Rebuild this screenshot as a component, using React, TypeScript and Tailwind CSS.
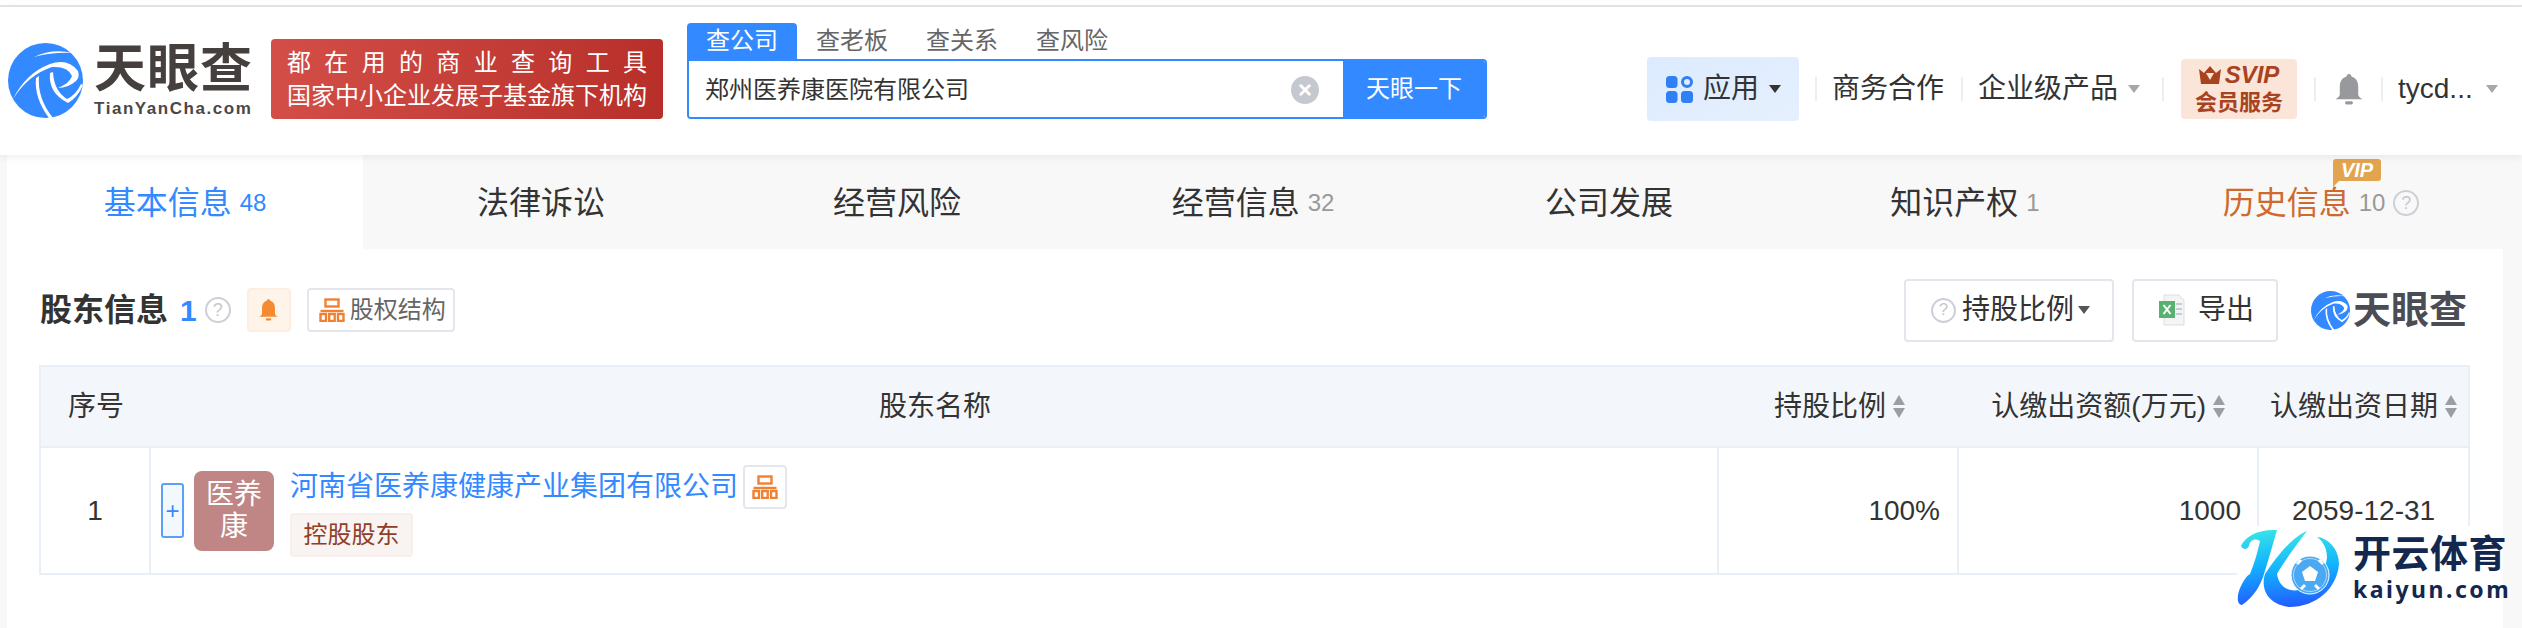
import { ReactNode } from 'react';

const BLUE = '#3389ff';

const TABS = [
  { label: '基本信息', count: '48', active: true },
  { label: '法律诉讼' },
  { label: '经营风险' },
  { label: '经营信息', count: '32' },
  { label: '公司发展' },
  { label: '知识产权', count: '1' },
  { label: '历史信息', count: '10', vip: true },
];

const TyLogoMark = ({ className }: { className: string }) => (
  <svg viewBox="0 0 75 75" className={className}>
    <circle cx="37.5" cy="37.5" r="37.5" fill={BLUE} />
    <path d="M26 14 Q44 5 65 10 Q45 9 26 14Z" fill="#fff" />
    <path d="M5 56 Q18 30 42 21 Q60 15 70 28 Q72 34 68 38 Q60 45 50 45 Q62 40 64 33 Q60 23 44 24 Q20 32 5 56Z" fill="#fff" />
    <path d="M31 33 Q29 55 45 75 L41 75 Q26 55 28 35Z" fill="#fff" />
    <path d="M42 30 Q40 50 60 60 Q70 54 75 42 L73 41 Q68 52 59 56 Q46 48 45 29Z" fill="#fff" />
  </svg>
);

const OrgIcon = ({ className }: { className: string }) => (
  <svg viewBox="0 0 26 24" fill="none" stroke="#f08132" strokeWidth="2.4" className={className}>
    <rect x="6.5" y="1.5" width="13" height="7" />
    <path d="M1.5 13h23" />
    <rect x="1.5" y="16" width="5.5" height="7" />
    <rect x="10.2" y="16" width="5.5" height="7" />
    <rect x="19" y="16" width="5.5" height="7" />
  </svg>
);

const BellIcon = ({ className, fill }: { className: string; fill: string }) => (
  <svg viewBox="0 0 28 32" className={className} fill={fill}>
    <path d="M14 0c1.500 0 2.500 1 2.500 2.500C21.500 4 23.500 8 23.500 13v8c0 2 2 4 4.500 5H0c2.500-1 4.500-3 4.500-5v-8c0-5 2-9 7-10.500C11.500 1 12.500 0 14 0z" />
    <rect x="10" y="28" width="8" height="3.500" rx="1.500" />
  </svg>
);

const Help = ({ className }: { className: string }) => (
  <span className={`flex items-center justify-center rounded-full border-2 border-[#ccd0d6] text-[#c4c8ce] ${className}`}>?</span>
);

const Caret = ({ className }: { className: string }) => (
  <span className={`h-0 w-0 border-x-[6px] border-t-[8px] border-x-transparent ${className}`} />
);

const Sort = () => (
  <span className="ml-[7px] flex flex-col gap-[3px]">
    <span className="h-0 w-0 border-x-[6px] border-b-[10px] border-x-transparent border-b-[#9a9ea5]" />
    <span className="h-0 w-0 border-x-[6px] border-t-[10px] border-x-transparent border-t-[#9a9ea5]" />
  </span>
);

const Divider = ({ className }: { className: string }) => <span className={`h-[24px] w-[2px] bg-[#eeeeee] ${className}`} />;

const OutlineBtn = ({ className, children }: { className: string; children: ReactNode }) => (
  <div className={`flex items-center rounded-[4px] border-2 border-[#e3e6ec] bg-white ${className}`}>{children}</div>
);

const Nav = () => (
  <header className="relative z-10 flex h-[148px] shrink-0 items-start bg-white shadow-[0_2px_8px_rgba(0,0,0,0.07)]">
    <div className="ml-[8px] mt-[36px] flex w-[263px] shrink-0 items-start">
      <TyLogoMark className="h-[75px] w-[75px] shrink-0" />
      <div className="ml-[11px] flex flex-col">
        <span className="whitespace-nowrap text-[52px] leading-[52px] font-bold tracking-[1px] text-[#45403e]">天眼查</span>
        <span className="mt-[5px] whitespace-nowrap text-[17px] leading-[18px] font-bold tracking-[1.55px] text-[#4b4745]">TianYanCha.com</span>
      </div>
    </div>
    <div className="mt-[32px] flex h-[80px] w-[392px] flex-col items-center justify-center rounded-[4px] bg-gradient-to-r from-[#d44e48] to-[#b72f28] text-[24px] leading-[33px] text-white">
      <div className="flex w-[360px] justify-between">
        {'都在用的商业查询工具'.split('').map((c) => (
          <span key={c}>{c}</span>
        ))}
      </div>
      <div>国家中小企业发展子基金旗下机构</div>
    </div>
    <div className="ml-[24px] mt-[16px] w-[800px]">
      <div className="flex h-[36px] text-[24px] leading-[36px] text-[#666666]">
        <span className="w-[110px] rounded-t-[4px] bg-[#3389ff] text-center text-white">查公司</span>
        <span className="w-[110px] text-center">查老板</span>
        <span className="w-[110px] text-center">查关系</span>
        <span className="w-[110px] text-center">查风险</span>
      </div>
      <div className="flex h-[60px] overflow-hidden rounded-b-[4px] rounded-tr-[4px] border-2 border-[#3389ff]">
        <div className="flex flex-1 items-center bg-white pl-[16px] pr-[24px] pt-[2px] text-[24px] text-[#333333]">
          <span className="flex-1">郑州医养康医院有限公司</span>
          <span className="flex h-[28px] w-[28px] items-center justify-center rounded-full bg-[#c5c8ce] text-[24px] leading-none font-bold text-white">×</span>
        </div>
        <div className="flex w-[142px] items-center justify-center bg-[#3389ff] text-[24px] text-white">天眼一下</div>
      </div>
    </div>
    <div className="ml-[160px] mt-[50px] flex h-[64px] w-[152px] items-center rounded-[4px] bg-gradient-to-br from-[#dcebff] to-[#e6f0fd] pl-[19px]">
      <svg viewBox="0 0 27 27" className="h-[27px] w-[27px]">
        <rect x="0" y="0" width="11.500" height="12" rx="3.500" fill="#2f7ff5" />
        <circle cx="21" cy="6" r="4.500" fill="none" stroke="#2f7ff5" strokeWidth="3" />
        <rect x="0" y="15" width="11.500" height="12" rx="3.500" fill="#2f7ff5" />
        <rect x="15" y="15" width="12" height="12" rx="3.500" fill="#2f7ff5" />
      </svg>
      <span className="ml-[10px] text-[28px] text-[#333333]">应用</span>
      <Caret className="ml-[10px] border-t-[#333333]" />
    </div>
    <div className="mt-[50px] flex h-[64px] items-center text-[28px] text-[#333333]">
      <Divider className="ml-[16px]" />
      <span className="ml-[15px] w-[112px]">商务合作</span>
      <Divider className="ml-[17px]" />
      <span className="ml-[15px] w-[140px]">企业级产品</span>
      <Caret className="ml-[10px] border-t-[#a8a8a8]" />
      <Divider className="ml-[22px]" />
      <div className="ml-[17px] flex h-[60px] w-[116px] flex-col items-center justify-center rounded-[4px] bg-[#fbe4d8] text-[#a8431f]">
        <div className="flex h-[28px] items-center">
          <svg viewBox="0 0 22 18" className="h-[20px] w-[22px]" fill="#a8431f">
            <path d="M0 3l5 4 6-7 6 7 5-4-2 15H2z" />
            <path d="M7 7h8l-4 7z" fill="#fbe4d8" />
          </svg>
          <span className="ml-[4px] text-[24px] leading-none font-bold italic">SVIP</span>
        </div>
        <span className="text-[22px] leading-[28px] font-bold">会员服务</span>
      </div>
      <Divider className="ml-[17px]" />
      <BellIcon className="ml-[19px] h-[31px] w-[28px]" fill="#97999d" />
      <Divider className="ml-[18px]" />
      <span className="ml-[15px] w-[88px]">tycd...</span>
      <Caret className="border-t-[#a8a8a8]" />
    </div>
  </header>
);

const Tabs = () => (
  <div className="flex h-[94px] shrink-0 pr-[4px]">
    {TABS.map((tab) => (
      <div
        key={tab.label}
        className={`relative flex h-full flex-1 items-center justify-center pt-[2px] ${tab.active ? 'bg-white text-[#3389ff]' : 'text-[#333333]'}`}
      >
        <span className={`text-[32px] ${tab.vip ? 'text-[#cf6a2f]' : ''}`}>{tab.label}</span>
        {tab.count && <span className={`ml-[8px] text-[24px] ${tab.active ? '' : 'text-[#999999]'}`}>{tab.count}</span>}
        {tab.vip && <Help className="ml-[8px] h-[26px] w-[26px] text-[18px]" />}
        {tab.vip && (
          <span className="absolute left-[190px] top-[4px] flex h-[22px] w-[48px] items-center justify-center rounded-[3px] rounded-bl-none bg-[#e2a44f] text-[20px] leading-none font-bold italic text-white">
            VIP
            <span className="absolute left-0 top-[22px] h-0 w-0 border-r-[6px] border-t-[6px] border-r-transparent border-t-[#e2a44f]" />
          </span>
        )}
      </div>
    ))}
  </div>
);

const Toolbar = () => (
  <div className="flex h-[64px] items-center pl-[33px] pr-[33px]">
    <span className="text-[32px] font-bold text-[#333333]">股东信息</span>
    <span className="ml-[12px] text-[30px] font-bold text-[#3389ff]">1</span>
    <Help className="ml-[8px] h-[26px] w-[26px] text-[18px]" />
    <div className="ml-[16px] flex h-[44px] w-[44px] items-center justify-center rounded-[4px] border-2 border-[#fdeee0] bg-[#fff4ea]">
      <BellIcon className="h-[22px] w-[19px]" fill="#f58a30" />
    </div>
    <OutlineBtn className="ml-[16px] h-[44px] w-[148px] pl-[10px]">
      <OrgIcon className="h-[24px] w-[26px]" />
      <span className="ml-[5px] text-[24px] text-[#666666]">股权结构</span>
    </OutlineBtn>
    <div className="flex-1" />
    <OutlineBtn className="h-[63px] w-[210px] pl-[25px] text-[28px] text-[#333333]">
      <Help className="h-[25px] w-[25px] text-[17px]" />
      <span className="ml-[6px]">持股比例</span>
      <Caret className="ml-[4px] border-t-[#555555]" />
    </OutlineBtn>
    <OutlineBtn className="ml-[18px] h-[63px] w-[146px] pl-[25px] text-[28px] text-[#333333]">
      <svg viewBox="0 0 26 32" className="h-[32px] w-[26px]">
        <path d="M5 1h15l5 5v25H5z" fill="#f3f4f5" stroke="#dcdee0" />
        <path d="M17 10h6M17 15h6M17 20h6" stroke="#c9ccd0" strokeWidth="2" />
        <rect x="0" y="7" width="16" height="17" fill="#58b26f" />
        <path d="M4.500 11l7 9M11.500 11l-7 9" stroke="#fff" strokeWidth="2" />
      </svg>
      <span className="ml-[13px]">导出</span>
    </OutlineBtn>
    <div className="ml-[33px] flex w-[159px] shrink-0 items-center">
      <TyLogoMark className="h-[39px] w-[39px] shrink-0" />
      <span className="ml-[3px] whitespace-nowrap text-[38px] leading-[40px] font-bold text-[#4b4d55]">天眼查</span>
    </div>
  </div>
);

const Table = () => (
  <div className="ml-[32px] mr-[33px] mt-[23px] border-2 border-[#e8eff6] text-[28px] text-[#333333]">
    <div className="flex h-[81px] items-center border-b-2 border-[#e8eff6] bg-[#f3f7fb]">
      <div className="w-[110px] text-center">序号</div>
      <div className="flex-1 text-center">股东名称</div>
      <div className="flex w-[240px] items-center justify-end pr-[54px]">持股比例<Sort /></div>
      <div className="flex w-[300px] items-center justify-end pr-[34px]">认缴出资额(万元)<Sort /></div>
      <div className="flex w-[209px] items-center justify-end pr-[11px]">认缴出资日期<Sort /></div>
    </div>
    <div className="flex h-[125px]">
      <div className="flex w-[110px] items-center justify-center border-r-2 border-[#e8eff6]">1</div>
      <div className="flex flex-1 items-center border-r-2 border-[#e8eff6] pl-[10px]">
        <span className="flex h-[55px] w-[23px] items-center justify-center rounded-[3px] border-2 border-[#5aa0f7] bg-[#f3f8ff] text-[24px] text-[#3389ff]">+</span>
        <div className="ml-[10px] flex h-[80px] w-[80px] flex-col items-center justify-center rounded-[8px] bg-[#c08585] text-[28px] leading-[32px] text-white">
          <span>医养</span>
          <span>康</span>
        </div>
        <div className="ml-[16px] flex flex-col">
          <div className="flex items-center">
            <span className="text-[#3389ff]">河南省医养康健康产业集团有限公司</span>
            <div className="ml-[5px] flex h-[44px] w-[44px] items-center justify-center rounded-[4px] border-2 border-[#e3e6ec]">
              <OrgIcon className="h-[24px] w-[26px]" />
            </div>
          </div>
          <span className="mt-[4px] flex h-[44px] w-[123px] items-center justify-center rounded-[4px] border-2 border-[#f6efed] bg-[#f9f3f2] text-[24px] text-[#8f3f26]">控股股东</span>
        </div>
      </div>
      <div className="flex w-[240px] items-center justify-end border-r-2 border-[#e8eff6] pr-[17px]">100%</div>
      <div className="flex w-[300px] items-center justify-end border-r-2 border-[#e8eff6] pr-[16px]">1000</div>
      <div className="flex w-[209px] items-center justify-center">2059-12-31</div>
    </div>
  </div>
);

const Watermark = () => (
  <div className="absolute left-[2237px] top-[526px] z-20 flex h-[84px] w-[266px] items-center bg-white">
    <svg viewBox="0 0 103 80" className="h-[80px] w-[103px] shrink-0">
      <defs>
        <linearGradient id="ky" x1="0.45" y1="0" x2="0.55" y2="1">
          <stop offset="0" stopColor="#39e6e6" />
          <stop offset="0.5" stopColor="#12b0ff" />
          <stop offset="1" stopColor="#2458ff" />
        </linearGradient>
      </defs>
      <path d="M4 18C8 8 22 1 40 2 36 16 32 30 27 46 24 56 18 68 5 77-1 76 0 66 4 58 8 50 10 48 13 46 18 34 21 22 23 13 18 10 13 12 12 18 10 22 6 22 4 18Z" fill="url(#ky)" />
      <path d="M70 3C58 8 44 22 28 46 24 58 28 76 52 79 80 79 100 60 102 36 102 22 92 10 80 9 84 12 90 18 90 30 88 46 78 58 62 62 50 64 42 58 40 46 48 32 60 16 70 3Z" fill="url(#ky)" />
      <circle cx="73" cy="47" r="19" fill="#4aa9f2" stroke="#ffffff" strokeWidth="1" />
      <circle cx="73" cy="47" r="16.500" fill="none" stroke="#bfe4fb" strokeWidth="0.800" />
      <path d="M73 38l8 6-3 9H68l-3-9z" fill="#fff" />
      <path d="M60 36l4-4M86 36l-4-4M64 61l4-4M82 61l-4-4" stroke="#fff" strokeWidth="3" />
    </svg>
    <div className="ml-[13px] flex shrink-0 flex-col text-[#13274f]">
      <span className="whitespace-nowrap text-[38px] leading-[38px] font-bold tracking-[0.500px]">开云体育</span>
      <span className="mt-[3px] whitespace-nowrap text-[23px] leading-[26px] font-bold tracking-[2.500px] font-['Noto_Sans',sans-serif]">kaiyun.com</span>
    </div>
  </div>
);

export default function App() {
  return (
    <div className="relative flex h-[628px] w-[2522px] flex-col overflow-hidden bg-white font-['Liberation_Sans','Noto_Sans_CJK_SC',sans-serif]">
      <div className="h-[7px] shrink-0 border-b-2 border-[#e6e6e6] bg-white" />
      <Nav />
      <div className="flex flex-1 bg-[#f8f8f8] pl-[7px] pr-[19px]">
        <main className="flex flex-1 flex-col">
          <Tabs />
          <div className="flex-1 bg-white pt-[29px]">
            <Toolbar />
            <Table />
          </div>
        </main>
      </div>
      <Watermark />
    </div>
  );
}
